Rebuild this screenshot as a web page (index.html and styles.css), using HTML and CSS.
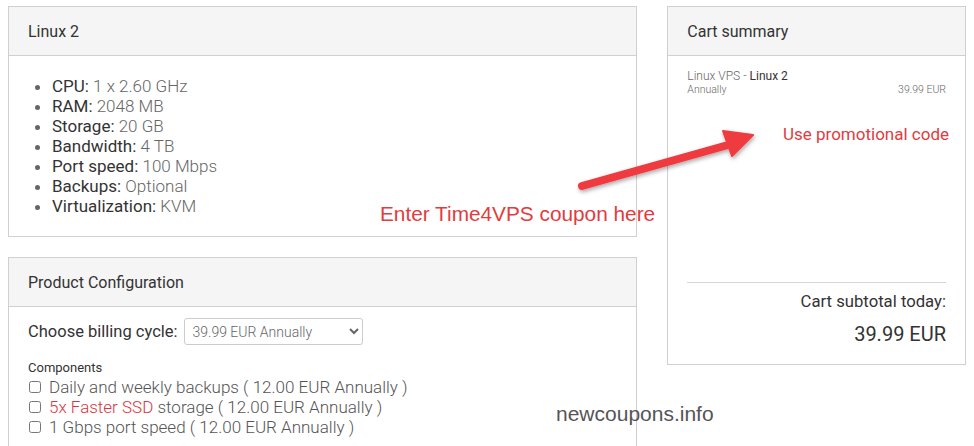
FILE: index.html
```html
<!DOCTYPE html>
<html lang="en">
<head>
  <meta charset="UTF-8" />
  <title>Configure – Linux 2</title>
  <link rel="stylesheet" href="styles.css">
</head>
<body>

  <div class="page">
    <!-- Left column -->
    <div class="main-col">
      <section class="panel">
        <div class="panel-head">Linux 2</div>
        <div class="panel-body specs">
          <ul>
            <li><b>CPU:</b> 1 x 2.60 GHz</li>
            <li><b>RAM:</b> 2048 MB</li>
            <li><b>Storage:</b> 20 GB</li>
            <li><b>Bandwidth:</b> 4 TB</li>
            <li><b>Port speed:</b> 100 Mbps</li>
            <li><b>Backups:</b> Optional</li>
            <li><b>Virtualization:</b> KVM</li>
          </ul>
        </div>
      </section>

      <section class="panel config">
        <div class="panel-head">Product Configuration</div>
        <div class="panel-body">
          <div class="billing">
            <label for="cycle">Choose billing cycle:</label>
            <select id="cycle">
              <option>39.99 EUR Annually</option>
            </select>
          </div>
          <div class="components">
            <div class="comp-title">Components</div>
            <label class="check"><input type="checkbox"><span>Daily and weekly backups ( 12.00 EUR Annually )</span></label>
            <label class="check"><input type="checkbox"><span><span class="red">5x Faster SSD</span> storage ( 12.00 EUR Annually )</span></label>
            <label class="check"><input type="checkbox"><span>1 Gbps port speed ( 12.00 EUR Annually )</span></label>
          </div>
        </div>
      </section>
    </div>

    <!-- Cart summary -->
    <aside class="panel cart">
      <div class="panel-head">Cart summary</div>
      <div class="panel-body cart-body">
        <div class="item-name">Linux VPS - <b>Linux 2</b></div>
        <div class="item-row">
          <span>Annually</span>
          <span>39.99 EUR</span>
        </div>
        <div class="totals">
          <div class="sub-label">Cart subtotal today:</div>
          <div class="sub-price">39.99 EUR</div>
        </div>
      </div>
    </aside>
  </div>

  <!-- annotations drawn over the screenshot -->
  <div class="note note-promo">Use promotional code</div>
  <div class="note note-enter">Enter Time4VPS coupon here</div>
  <svg class="arrow" width="200" height="80" viewBox="0 0 200 80">
    <defs>
      <filter id="sh" x="-20%" y="-40%" width="140%" height="180%">
        <feDropShadow dx="1" dy="2" stdDeviation="2" flood-color="#000" flood-opacity="0.35"/>
      </filter>
    </defs>
    <g filter="url(#sh)" fill="#ef3b3f" stroke="#ef3b3f" stroke-linejoin="round">
      <path d="M12 64 L158 23" stroke-width="8" stroke-linecap="round" fill="none"/>
      <path d="M153 9 L183 13 L162 34 Z" stroke-width="2"/>
    </g>
  </svg>
  <div class="watermark">newcoupons.info</div>

</body>
</html>
```

FILE: styles.css
```css
/* Base */
body {
  margin: 0;
  background: #fff;
  font-family: 'Roboto', 'Liberation Sans', sans-serif;
  color: #333;
  position: relative;
  height: 446px;
  overflow: hidden;
}

.page {
  display: flex;
  align-items: flex-start;
  gap: 30px;
  padding: 6px 8px;
}

.main-col {
  width: 630px;
  display: flex;
  flex-direction: column;
  gap: 20px;
}

/* Panels */
.panel {
  border: 1px solid #d0d0d0;
  background: #fff;
}

.panel-head {
  background: #f5f5f5;
  border-bottom: 1px solid #d0d0d0;
  height: 48px;
  line-height: 50px;
  padding: 0 19px;
  font-size: 16px;
  color: #333;
}

.panel-body {
  padding: 20px 19px;
}

/* Specs list */
.specs ul {
  margin: 0;
  padding-left: 24px;
  font-size: 17px;
  line-height: 20px;
  font-weight: 300;
  color: #666;
}

.specs li b {
  font-weight: 400;
  color: #333;
}

/* Configuration */
.config .panel-body {
  padding: 11px 19px 10px;
}

.billing {
  display: flex;
  align-items: center;
  gap: 6px;
}

.billing label {
  font-size: 16.5px;
  color: #333;
}

.billing select {
  width: 179px;
  height: 27px;
  border: 1px solid #ccc;
  border-radius: 3px;
  background: #fff;
  font-family: 'Roboto', sans-serif;
  font-size: 14px;
  font-weight: 300;
  color: #666;
  padding: 0 4px;
}

.components {
  margin-top: 14px;
}

.comp-title {
  font-size: 13px;
  line-height: 18px;
  color: #333;
}

.check {
  display: flex;
  align-items: center;
  font-size: 17px;
  line-height: 20px;
  font-weight: 300;
  color: #555;
  white-space: pre;
}

.check input {
  margin: 0 8px 0 1px;
  width: 12px;
  height: 12px;
}

.red {
  color: #d9363e;
}

/* Cart */
.cart {
  width: 297px;
}

.cart-body {
  height: 308px;
  box-sizing: border-box;
  padding: 13px 19px 17px;
  display: flex;
  flex-direction: column;
}

.item-name {
  font-size: 12px;
  line-height: 14px;
  font-weight: 300;
  color: #666;
}

.item-name b {
  font-weight: 400;
  color: #333;
}

.item-row {
  display: flex;
  justify-content: space-between;
  font-size: 10.5px;
  line-height: 14px;
  font-weight: 300;
  color: #666;
}

.totals {
  margin-top: auto;
  border-top: 1px solid #d6d6d6;
  text-align: right;
  padding-top: 8px;
}

.sub-label {
  font-size: 16.7px;
  line-height: 22px;
  color: #333;
}

.sub-price {
  font-size: 20px;
  line-height: 26px;
  margin-top: 8px;
  color: #333;
}

/* Annotations */
.note {
  position: absolute;
  color: #e23b40;
  white-space: nowrap;
}

.note-promo {
  left: 783px;
  top: 124px;
  font-size: 17px;
  font-family: 'Roboto', sans-serif;
}

.note-enter {
  left: 380px;
  top: 202px;
  font-size: 20.8px;
  font-family: 'Liberation Sans', Arial, sans-serif;
}

.arrow {
  position: absolute;
  left: 570px;
  top: 122px;
}

.watermark {
  position: absolute;
  left: 556px;
  top: 402px;
  font-size: 21px;
  font-family: 'Liberation Sans', Arial, sans-serif;
  color: #555;
}
```
